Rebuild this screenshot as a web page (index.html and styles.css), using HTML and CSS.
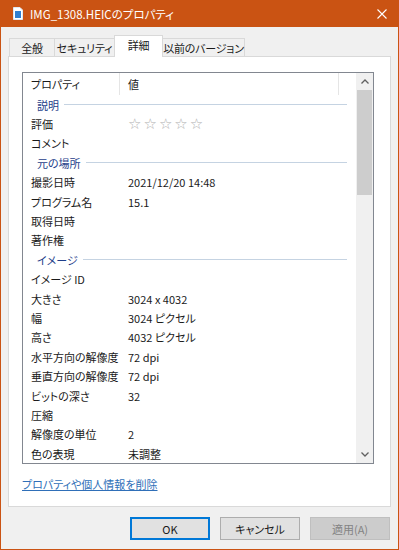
FILE: index.html
```html
<!DOCTYPE html>
<html lang="ja">
<head>
    <meta charset="UTF-8">
    <title>IMG_1308.HEICのプロパティ</title>
    <link rel="stylesheet" href="styles.css">
</head>
<body>
    <div class="window">
        <div class="titlebar">
            <svg class="title-icon" width="10" height="13" viewBox="0 0 10 13">
                <path d="M0.5 0.5 H7 L9.5 3 V12.5 H0.5 Z" fill="#fff" stroke="#dfe7f0"/>
                <rect x="2" y="4" width="6" height="7" fill="#2f7fd0"/>
            </svg>
            <span class="title-text">IMG_1308.HEICのプロパティ</span>
            <svg class="close" width="10" height="10" viewBox="0 0 10 10">
                <path d="M0.5 0.5 L9.5 9.5 M9.5 0.5 L0.5 9.5" stroke="#fff" stroke-width="1.1"/>
            </svg>
        </div>

        <div class="dialog">
            <div class="tabs">
                <div class="tab tab-general">全般</div>
                <div class="tab tab-security">セキュリティ</div>
                <div class="tab tab-details active">詳細</div>
                <div class="tab tab-previous">以前のバージョン</div>
            </div>

            <div class="panel">
                <div class="listbox">
                    <div class="list-content">
                        <div class="list-header">
                            <div class="col-name">プロパティ</div>
                            <div class="col-value">値</div>
                            <div class="col-rest"></div>
                        </div>
                        <div id="rows"></div>
                    </div>
                    <div class="scrollbar">
                        <div class="scroll-btn">
                            <svg width="8" height="5" viewBox="0 0 8 5"><path d="M0.5 4.5 L4 1 L7.5 4.5" fill="none" stroke="#606060" stroke-width="1.3"/></svg>
                        </div>
                        <div class="scroll-track">
                            <div class="scroll-thumb"></div>
                        </div>
                        <div class="scroll-btn">
                            <svg width="8" height="5" viewBox="0 0 8 5"><path d="M0.5 0.5 L4 4 L7.5 0.5" fill="none" stroke="#606060" stroke-width="1.3"/></svg>
                        </div>
                    </div>
                </div>
                <a class="remove-link" href="#">プロパティや個人情報を削除</a>
            </div>

            <div class="buttons">
                <button class="btn default">OK</button>
                <button class="btn">キャンセル</button>
                <button class="btn disabled">適用(A)</button>
            </div>
        </div>
    </div>

    <script>
        // 詳細タブの項目
        const rows = [
            { group: '説明' },
            { name: '評価', stars: true },
            { name: 'コメント', value: '' },
            { group: '元の場所' },
            { name: '撮影日時', value: '2021/12/20 14:48' },
            { name: 'プログラム名', value: '15.1' },
            { name: '取得日時', value: '' },
            { name: '著作権', value: '' },
            { group: 'イメージ' },
            { name: 'イメージ ID', value: '' },
            { name: '大きさ', value: '3024 x 4032' },
            { name: '幅', value: '3024 ピクセル' },
            { name: '高さ', value: '4032 ピクセル' },
            { name: '水平方向の解像度', value: '72 dpi' },
            { name: '垂直方向の解像度', value: '72 dpi' },
            { name: 'ビットの深さ', value: '32' },
            { name: '圧縮', value: '' },
            { name: '解像度の単位', value: '2' },
            { name: '色の表現', value: '未調整' }
        ];

        const list = document.getElementById('rows');
        rows.forEach(row => {
            const el = document.createElement('div');
            if (row.group) {
                el.className = 'group-row';
                el.innerHTML = `<span class="group-label">${row.group}</span><span class="group-line"></span>`;
            } else {
                el.className = 'prop-row';
                const value = row.stars
                    ? '<span class="stars">☆☆☆☆☆</span>'
                    : row.value;
                el.innerHTML = `<div class="prop-name">${row.name}</div><div class="prop-value">${value}</div>`;
            }
            list.appendChild(el);
        });
    </script>
</body>
</html>
```

FILE: styles.css
```css
body {
    margin: 0;
    font-family: "Noto Sans CJK JP", "Noto Sans", sans-serif;
    font-size: 11px;
    font-feature-settings: "palt";
    color: #1a1a1a;
}
.window {
    width: 399px;
    height: 550px;
    box-sizing: border-box;
    border: 1px solid #ca5313;
    border-top: none;
    background: #f0f0f0;
    display: flex;
    flex-direction: column;
    overflow: hidden;
}
.titlebar {
    height: 27px;
    background: #ca5313;
    color: #fff;
    display: flex;
    align-items: center;
    padding-left: 12px;
    padding-right: 10px;
    flex-shrink: 0;
}
.title-icon {
    margin-right: 7px;
}
.title-text {
    font-size: 11.5px;
    flex: 1;
}
.close {
    margin-right: 1px;
}
.dialog {
    padding: 0 7px;
    flex: 1;
    display: flex;
    flex-direction: column;
}
.tabs {
    margin-top: 8px;
    margin-left: 1px;
    height: 21px;
    display: flex;
    align-items: flex-end;
    position: relative;
    z-index: 1;
}
.tab {
    height: 18px;
    box-sizing: border-box;
    border: 1px solid #d9d9d9;
    border-bottom: none;
    margin-right: -1px;
    background: #f0f0f0;
    display: flex;
    align-items: center;
    justify-content: center;
    white-space: nowrap;
    letter-spacing: -0.2px;
}
.tab.active {
    height: 22px;
    margin-bottom: -1px;
    background: #fff;
    padding-bottom: 3px;
}
.tab-general { width: 46px; }
.tab-security { width: 61px; }
.tab-details { width: 49px; }
.tab-previous { width: 83px; }
.panel {
    height: 451px;
    box-sizing: border-box;
    border: 1px solid #d9d9d9;
    background: #fff;
    padding: 15px 16px 0 13px;
}
.listbox {
    height: 392px;
    box-sizing: border-box;
    border: 1px solid #828790;
    display: flex;
    overflow: hidden;
}
.list-content {
    flex: 1;
    overflow: hidden;
}
.list-header {
    height: 22px;
    display: flex;
    align-items: center;
}
.list-header > div {
    height: 100%;
    display: flex;
    align-items: center;
    box-sizing: border-box;
}
.col-name {
    width: 97px;
    padding-left: 8px;
    border-right: 1px solid #e5e5e5;
}
.col-value {
    width: 219px;
    padding-left: 8px;
    border-right: 1px solid #e5e5e5;
}
.col-rest {
    flex: 1;
}
.group-row {
    height: 19.4px;
    display: flex;
    align-items: center;
    padding-left: 14px;
    padding-right: 9px;
}
.group-label {
    color: #1e3e8a;
    margin-right: 5px;
}
.group-line {
    flex: 1;
    height: 1px;
    background: #c5d3e2;
}
.prop-row {
    height: 19.4px;
    display: flex;
    align-items: center;
}
.prop-name {
    width: 97px;
    padding-left: 8px;
    box-sizing: border-box;
    white-space: nowrap;
}
.prop-value {
    padding-left: 8px;
    white-space: nowrap;
}
.stars {
    color: #b0b0b0;
    font-family: "DejaVu Sans", sans-serif;
    font-size: 15px;
    letter-spacing: 2px;
}
.scrollbar {
    width: 17px;
    background: #f0f0f0;
    display: flex;
    flex-direction: column;
}
.scroll-btn {
    height: 17px;
    display: flex;
    align-items: center;
    justify-content: center;
}
.scroll-track {
    flex: 1;
}
.scroll-thumb {
    height: 105px;
    margin: 0 1px;
    background: #cdcdcd;
}
.remove-link {
    display: inline-block;
    margin-top: 12px;
    color: #2f6fb8;
    text-decoration: underline;
}
.buttons {
    margin-top: 10px;
    margin-right: 1px;
    display: flex;
    justify-content: flex-end;
    gap: 10px;
}
.btn {
    width: 80px;
    height: 23px;
    box-sizing: border-box;
    border: 1px solid #adadad;
    background: #e1e1e1;
    font-family: inherit;
    font-size: 11px;
    font-feature-settings: "palt";
    color: #1a1a1a;
    padding: 0;
}
.btn.default {
    border: 2px solid #0078d7;
}
.btn.disabled {
    background: #cccccc;
    border-color: #bfbfbf;
    color: #838383;
}
```
